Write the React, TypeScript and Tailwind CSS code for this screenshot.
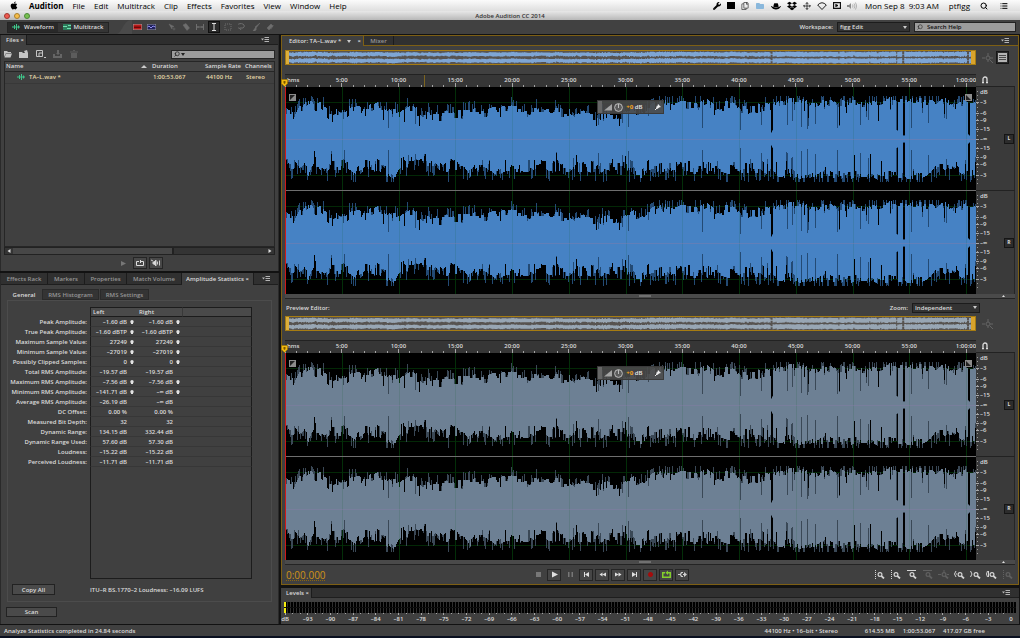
import React from 'react';
import { FaApple, FaDropbox, FaHatCowboy, FaFolder, FaWrench, FaVolumeDown, FaRegCopy } from 'react-icons/fa';
import { Search, List, Move } from 'lucide-react';

type Point = [number, number];

const COLS = 691;
const TOTAL_MIN = 60.88;

const TOP_ENVELOPE: Point[] = [
  [0, 31], [8, 27], [12, 34], [14, 38], [18, 37], [22, 42], [26, 41], [30, 36], [36, 37], [44, 28], [52, 31], [60, 29], [66, 36], [75, 33], [84, 35],
  [92, 37], [98, 38], [106, 29], [116, 33], [126, 36], [132, 33], [142, 28], [155, 27], [170, 29], [190, 31], [210, 32], [225, 34], [240, 31],
  [270, 31], [300, 29], [340, 28], [346, 34], [355, 30], [365, 35], [375, 40], [400, 38], [412, 39], [421, 42], [428, 37], [445, 38], [455, 33],
  [480, 36], [492, 38], [505, 41], [520, 40], [530, 36], [540, 41], [550, 38], [560, 41], [575, 39], [590, 38], [600, 42], [612, 42], [618, 40], [632, 42],
  [650, 38], [660, 42], [668, 36], [675, 39], [682, 40], [691, 38],
];
const BOTTOM_ENVELOPE: Point[] = [
  [0, 29], [8, 30], [14, 37], [18, 32], [24, 40], [30, 31], [40, 35], [48, 31], [56, 33], [62, 29], [70, 38], [78, 33], [86, 31], [98, 35], [108, 42],
  [114, 32], [124, 31], [135, 28], [150, 27], [158, 36], [165, 31], [180, 31], [186, 38], [194, 31], [200, 33], [210, 38], [222, 32], [235, 34],
  [250, 31], [280, 33], [310, 34], [340, 30], [352, 37], [356, 40], [362, 33], [380, 33], [400, 35], [425, 35], [450, 35], [475, 34], [490, 41],
  [505, 38], [520, 42], [540, 39], [560, 41], [580, 38], [600, 41], [615, 39], [632, 42], [645, 38], [652, 32], [668, 35], [682, 38], [691, 35],
];
const SLITS: Point[] = [
  [58, 20], [103, 11], [130, 15], [313, 14], [337, 16], [343, 12], [417, 11], [455, 9], [476, 14],
  [486, 6], [487, 8], [502, 14], [507, 18], [516, 12], [522, 10], [530, 15], [552, 11], [575, 14], [583, 19],
  [611, 9], [612, 8], [618, 3], [619, 3], [626, 11], [643, 16], [661, 20], [683, 4], [684, 3],
];

function envelope(points: Point[], x: number): number {
  for (let i = 1; i < points.length; i++) {
    if (x <= points[i][0]) {
      const [x0, y0] = points[i - 1];
      const [x1, y1] = points[i];
      return y0 + ((y1 - y0) * (x - x0)) / (x1 - x0);
    }
  }
  return points[points.length - 1][1];
}

function random(seed: number) {
  let s = seed;
  return () => {
    s = (s * 1664525 + 1013904223) % 4294967296;
    return s / 4294967296;
  };
}

function samples(points: Point[], seed: number, depth: number) {
  const rnd = random(seed);
  const solid: number[] = [];
  const peak: number[] = [];
  let held = 0;
  let left = 0;
  for (let x = 0; x < COLS; x++) {
    const base = envelope(points, x);
    const dense = x > 485;
    if (left <= 0) {
      held = Math.pow(rnd(), 1.6) * (dense ? depth * 0.7 : depth);
      left = 1 + Math.floor(rnd() * 3);
    }
    left--;
    const dip = rnd() < (dense ? 0.09 : 0.05) ? 4 + rnd() * (dense ? 18 : 8) : 0;
    const slit = SLITS.find((s) => s[0] === x);
    let value = base - held - dip;
    let top = Math.min(43, value + (rnd() < 0.5 ? rnd() * depth * 0.9 : 0));
    if (slit) {
      value = slit[1];
      top = slit[1] < 9 ? slit[1] + 1 : base * 0.9;
    }
    solid.push(Math.round(value));
    peak.push(Math.round(Math.max(top, value)));
  }
  return { solid, peak };
}

const upper = samples(TOP_ENVELOPE, 77, 10);
const lower = samples(BOTTOM_ENVELOPE, 4021, 13);

function outline(up: number[], down: number[]): string {
  let d = 'M0 ' + (52 - up[0]);
  for (let x = 0; x < COLS; x++) d += 'V' + (52 - up[x]) + 'H' + (x + 1);
  for (let x = COLS - 1; x >= 0; x--) d += 'V' + (52 + down[x]) + 'H' + x;
  return d + 'Z';
}

const SOLID_PATH = outline(upper.solid, lower.solid);
const PEAK_PATH = outline(upper.peak, lower.peak);

const minutes = Array.from({ length: 61 }, (_, i) => i);
const labels = minutes.filter((m) => m > 0 && m % 5 === 0);
const pct = (m: number) => (m / TOTAL_MIN) * 100 + '%';
const LEVELS = [-3, -6, -9, -15];
const level = (db: number) => 50 * Math.pow(10, db / 20);
const GRID_PATH = labels.map((m) => 'M' + (Math.round((m / TOTAL_MIN) * COLS) + 0.5) + ' 0V103').join('');

function Track({ color, peakColor }: { color: string; peakColor: string }) {
  return (
    <svg className="block min-h-24 w-full flex-1 bg-black" viewBox="0 0 691 103" preserveAspectRatio="none" shapeRendering="crispEdges">
      <path d={'M0 15.5H691M0 88.5H691' + GRID_PATH} stroke="#032806" />
      <path d={PEAK_PATH} fill={peakColor} />
      <path d={SOLID_PATH} fill={color} />
      <path d={GRID_PATH} stroke="#0a5a1a" strokeOpacity="0.12" />
      <path d="M0 52.5H691" stroke="#8a7aa8" strokeOpacity="0.4" />
    </svg>
  );
}

function ScaleColumn({ name }: { name: string }) {
  const rows = [
    { text: 'dB', top: 5 },
    ...LEVELS.map((db) => ({ text: String(db).replace('-', '–'), top: 50 - level(db) })),
    { text: '–∞', top: 50 },
    ...LEVELS.map((db) => ({ text: String(db).replace('-', '–'), top: 50 + level(db) })),
  ];
  return (
    <div className="relative flex-1 border-r border-[#262626]">
      <svg className="absolute inset-y-0 left-0 h-full w-[3px]" viewBox="0 0 3 103" preserveAspectRatio="none" shapeRendering="crispEdges">
        <path d="M1.5 4V100" stroke="#9a9a9a" strokeDasharray="1 3" />
        {rows.slice(1).map((r, i) => (
          <path key={i} d={'M0 ' + (r.top * 1.03).toFixed(0) + '.5h3'} stroke="#a8a8a8" />
        ))}
      </svg>
      {rows.map((r, i) => (
        <span key={i} className="absolute left-1 -translate-y-1/2 leading-none" style={{ top: r.top + '%' }}>
          {r.text}
        </span>
      ))}
      <button className="absolute top-1/2 right-0 h-2.5 w-2.5 -translate-y-1/2 border border-[#151515] bg-[#2c2c2c] text-center text-[5px] leading-none font-bold">
        {name}
      </button>
    </div>
  );
}

function Overview({ color, listButton }: { color: string; listButton?: boolean }) {
  return (
    <div className="flex h-[15px] items-center">
      <div className="relative h-full flex-1 border border-[#a67c12] bg-[#575350]">
        <svg className="block h-full w-full" viewBox="0 0 691 206" preserveAspectRatio="none">
          <path d={PEAK_PATH} fill={color} />
          <path d={PEAK_PATH} fill={color} transform="translate(0 102)" />
        </svg>
        <span className="absolute inset-y-0 left-0 w-[3px] bg-[#dcae3c]" />
        <span className="absolute inset-y-0 right-0 w-1 bg-[#d8a32c]" />
      </div>
      <div className="flex w-[39px] items-center justify-center gap-0.5">
        <svg className="h-3 w-3 text-[#646464]" viewBox="0 0 12 12" fill="none" stroke="currentColor">
          <path d="M0 6h3M6 1v3M8 6h3M6 8v2M8 8l3 3" />
          <circle cx="6" cy="6" r="2" />
        </svg>
        {listButton ? (
          <button aria-label="List view" className="flex h-[13px] w-[13px] items-center justify-center border border-[#161616] bg-[#2d2d2d]">
            <svg className="h-[9px] w-[9px]" viewBox="0 0 9 9" shapeRendering="crispEdges">
              <path d="M0 0h9v9H0z" fill="#b4b4b4" />
              <path d="M1 2.500h7M1 4.500h7M1 6.500h7" stroke="#4a4a4a" />
            </svg>
          </button>
        ) : (
          <span className="w-[13px]" />
        )}
      </div>
    </div>
  );
}

function Ruler({ marker }: { marker?: boolean }) {
  return (
    <div className="flex h-[13px]">
      <div className="relative flex-1">
        <div className="absolute inset-0 overflow-hidden border-t border-[#222] bg-[#363636]">
          <svg className="absolute inset-0 h-full w-full" shapeRendering="crispEdges">
            {minutes.map((m) => (
              <line key={m} x1={pct(m)} x2={pct(m)} y1={m % 5 === 0 ? 8 : 10} y2="13" stroke="#a5a5a5" />
            ))}
            {marker && <line x1="20.2%" x2="20.2%" y1="0" y2="13" stroke="#7c6420" />}
          </svg>
          <span className="absolute top-0.5 left-0.5 leading-none">hms</span>
          {labels.map((m) => (
            <span key={m} className="absolute top-0.5 -translate-x-1/2 leading-none" style={{ left: pct(m) }}>
              {m === 60 ? '1:00:00' : m + ':00'}
            </span>
          ))}
        </div>
        <svg className="absolute top-[5px] -left-1 z-10 h-2 w-[7px]" viewBox="0 0 7 8">
          <path d="M.5 .5h6v4l-3 3-3-3z" fill="#f0b810" stroke="#9c7200" strokeWidth=".6" />
          <path d="M2.500 2v2l1 1 1-1V2z" fill="#7a5800" />
        </svg>
      </div>
      <div className="flex w-[39px] items-center border-b border-[#222] pl-[5px]">
        <svg className="h-2 w-2" viewBox="0 0 8 8" fill="none" stroke="#dcdcdc" strokeWidth="1.3">
          <path d="M2 6.500V3a2 2 0 0 1 4 0v3.500M1 6.700h2M5 6.700h2" />
        </svg>
      </div>
    </div>
  );
}

function FadeHandle({ flip }: { flip?: boolean }) {
  return (
    <svg className="h-[7px] w-[7px]" viewBox="0 0 7 7">
      <path d="M0 0h7v7H0z" fill="#8c8c8c" />
      <path d="M1 1h5v5H1z" fill="#222" />
      <path d={flip ? 'M1 1l5 5V1z' : 'M1 6l5-5v5z'} fill="#8c8c8c" />
    </svg>
  );
}

function Waveforms({ color, peakColor }: { color: string; peakColor: string }) {
  return (
    <div className="flex flex-1">
      <div className="relative flex flex-1 flex-col gap-px bg-[#6e6e6e]">
        <Track color={color} peakColor={peakColor} />
        <Track color={color} peakColor={peakColor} />
        <span className="absolute inset-y-0 left-0 w-px bg-[#d01818]" />
        <div className="absolute inset-x-1 top-[7px] flex justify-between">
          <FadeHandle />
          <FadeHandle flip />
        </div>
        <div className="absolute top-[13px] left-[45.2%] flex h-[14px] w-[67px] items-center gap-0.5 border border-[#3a3a3a] bg-[#4a4a4a]/90 pr-0.5">
          <span className="h-full w-1 bg-[#666]" />
          <svg className="h-2 w-2" viewBox="0 0 8 8">
            <path d="M0 7.500L8 1v6.500z" fill="#a4a4a4" />
          </svg>
          <svg className="h-[9px] w-[9px]" viewBox="0 0 9 9" fill="none" stroke="#bcbcbc">
            <circle cx="4.500" cy="4.500" r="3.900" fill="#5c5c5c" />
            <path d="M4.500 1v4" />
          </svg>
          <span className="pl-px leading-none whitespace-nowrap text-[#e8e8e8]">
            <span className="font-bold text-[#f5a41c]">+0</span> dB
          </span>
          <svg className="ml-auto h-1.5 w-1.5" viewBox="0 0 6 6" stroke="#eee" fill="#eee">
            <path d="M0 6l2-2" />
            <path d="M3 0l3 3-2 .5L2.500 5 1 3l1.500-1z" stroke="none" />
          </svg>
        </div>
      </div>
      <div className="flex w-[39px] flex-col gap-px bg-[#222]">
        <div className="flex flex-1 bg-[#3a3a3a]">
          <ScaleColumn name="L" />
        </div>
        <div className="flex flex-1 bg-[#3a3a3a]">
          <ScaleColumn name="R" />
        </div>
      </div>
    </div>
  );
}

function TrackScroll() {
  return (
    <div className="flex h-[5px] items-center border-b border-[#242424] bg-[#4a4a4a]">
      <span className="flex-1" />
      <span className="h-0.5 w-3 bg-[#707070]" />
      <span className="flex flex-1 justify-end pr-2.5">
        <svg className="h-0.5 w-[3px]" viewBox="0 0 3 2">
          <path d="M0 2l1.500-2L3 2z" fill="#e0e0e0" />
        </svg>
      </span>
    </div>
  );
}

function PanelMenu() {
  return (
    <button aria-label="Panel menu" className="flex w-[17px] items-center">
      <svg className="h-[5px] w-2" viewBox="0 0 8 5">
        <path d="M0 1.500h3L1.500 3.500zM3.500 0H8v1H3.500zM3.500 2H8v1H3.500zM3.500 4H8v1H3.500z" fill="#b4b4b4" />
      </svg>
    </button>
  );
}

function Select({ id, value, className }: { id: string; value: string; className: string }) {
  return (
    <span className={'relative flex h-2.5 items-center border border-[#1c1c1c] bg-[#333] ' + className}>
      <select id={id} defaultValue={value} className="h-full w-full appearance-none bg-transparent pl-0.5 leading-none outline-none">
        <option>{value}</option>
      </select>
      <svg className="pointer-events-none absolute right-0.5 h-[3px] w-1" viewBox="0 0 4 3">
        <path d="M0 0h4L2 3z" fill="#ccc" />
      </svg>
    </span>
  );
}

function WaveIcon() {
  return (
    <svg className="h-1.5 w-2" viewBox="0 0 8 6" stroke="#3fc58a" fill="none">
      <path d="M0 3h8M2.500 1v4M4.500 0v6M6.500 1.500v3" />
    </svg>
  );
}

type Stat = [string, string, string, boolean];
const STATS: Stat[] = [
  ['Peak Amplitude:', '–1.60 dB', '–1.60 dB', true],
  ['True Peak Amplitude:', '–1.60 dBTP', '–1.60 dBTP', true],
  ['Maximum Sample Value:', '27249', '27249', true],
  ['Minimum Sample Value:', '–27019', '–27019', true],
  ['Possibly Clipped Samples:', '0', '0', true],
  ['Total RMS Amplitude:', '–19.57 dB', '–19.57 dB', false],
  ['Maximum RMS Amplitude:', '–7.56 dB', '–7.56 dB', true],
  ['Minimum RMS Amplitude:', '–141.71 dB', '–∞ dB', true],
  ['Average RMS Amplitude:', '–26.19 dB', '–∞ dB', false],
  ['DC Offset:', '0.00 %', '0.00 %', false],
  ['Measured Bit Depth:', '32', '32', false],
  ['Dynamic Range:', '134.15 dB', '332.44 dB', false],
  ['Dynamic Range Used:', '57.60 dB', '57.30 dB', false],
  ['Loudness:', '–15.22 dB', '–15.22 dB', false],
  ['Perceived Loudness:', '–11.71 dB', '–11.71 dB', false],
];

function StatCell({ text, mark }: { text: string; mark: boolean }) {
  return (
    <div className="flex items-center justify-end gap-[3px] pr-[3px] whitespace-nowrap">
      {text}
      <span className="flex w-1 justify-center">
        {mark && (
          <svg className="h-1 w-1" viewBox="0 0 4 4">
            <circle cx="2" cy="1.700" r="1.700" fill="#e2e2e2" />
            <path d="M1 2h2v2H1z" fill="#e2e2e2" />
          </svg>
        )}
      </span>
    </div>
  );
}

function MenuBar() {
  const menus = ['File', 'Edit', 'Multitrack', 'Clip', 'Effects', 'Favorites', 'View', 'Window', 'Help'];
  return (
    <header className="flex h-[11px] items-center justify-between bg-linear-to-b from-[#fbfbfb] to-[#dedede] pr-2.5 pl-2.5 text-[8px] leading-none font-medium text-black">
      <nav className="flex items-center gap-[9px]">
        <FaApple className="mr-0.5 h-[9px] w-2" />
        <button className="font-bold">Audition</button>
        {menus.map((m) => (
          <button key={m}>{m}</button>
        ))}
      </nav>
      <div className="flex items-center gap-1.5">
        <FaWrench className="h-2 w-2" />
        <span className="h-[7px] w-2 bg-black" />
        <FaRegCopy className="h-2 w-2 text-[#444]" />
        <FaFolder className="h-2 w-2.5 text-[#8ab8dc]" />
        <FaHatCowboy className="h-2 w-2.5" />
        <FaDropbox className="h-2.5 w-2.5" />
        <Move className="h-2 w-2" />
        <svg className="h-2 w-2.5" viewBox="0 0 10 8" fill="none" stroke="#222">
          <path d="M.7 3Q5-1.500 9.300 3L5 7.500z" />
        </svg>
        <svg className="h-[7px] w-2" viewBox="0 0 8 7" fill="none" stroke="#111">
          <path d="M.5 .5h7v6h-7zM3 2v3M5 3.500H3" strokeWidth="1.300" />
        </svg>
        <svg className="h-2 w-2.5" viewBox="0 0 10 8" fill="none" stroke="#999">
          <path d="M0 3h2l2-2v6L2 5H0z" fill="#888" stroke="none" />
          <path d="M5.500 2.500q1 1.500 0 3M7 1.500q2 2.500 0 5M8.500 .5q2.500 3.500 0 7" strokeWidth=".7" />
        </svg>
        <span className="pl-0.5 whitespace-pre">Mon Sep 8  9:03 AM</span>
        <span className="pl-1">ptfigg</span>
        <Search className="mx-1 h-2 w-2" strokeWidth={3} />
        <List className="h-2 w-3" strokeWidth={3} />
      </div>
    </header>
  );
}

const TOOLS = [
  'M1 1l3 5V4l2-.5zM6 4.500v3M4.500 6h3',
  'M1 2l3-1.500L7.500 5 5 7.500z',
  'M.5 1v6M7.500 1v6M1 4h6M2 3v2M6 3v2',
  'M2 .5h4M4 .5v7M2 7.500h4',
  'M1 1h6v6H1z',
  'M3 7L2 5.500a3.500 2.500 0 1 1 3-.5H2',
  'M8 0L4 5 3 4zM3.500 4.500L1 8h2l1.500-2z',
  'M1 5l4-4 2 2-4 4zM5 6.500L7.500 2',
];

function Toolbar() {
  return (
    <div className="flex h-[14px] items-center bg-[#414141] pr-1 pl-[7px]">
      <div className="flex h-[11px] border border-[#242424]">
        <button className="flex w-[50px] items-center justify-center gap-1 bg-[#292929]">
          <WaveIcon /> Waveform
        </button>
        <button className="flex w-[50px] items-center justify-center gap-[3px] bg-[#353535]">
          <svg className="h-1.5 w-2" viewBox="0 0 8 6">
            <path d="M0 0h8v6H0z" fill="#2d7d5c" />
            <path d="M0 2h4v1H0zM4 4h4v1H4zM5 1h3v1H5z" fill="#6fe0b0" />
          </svg>
          Multitrack
        </button>
      </div>
      <svg className="ml-2 h-3.5 w-[15px]" viewBox="0 0 15 14">
        <path d="M0 14C6 12 6 0 15 0v14z" fill="#4a4a4a" />
      </svg>
      <div className="flex items-center gap-[5px] pl-px">
        <svg className="h-1.5 w-[9px]" viewBox="0 0 9 6">
          <path d="M0 0h9v6H0z" fill="#999" />
          <path d="M.5 .5h8v5h-8z" fill="#c01818" />
          <path d="M1 2.500h7v1.500H1z" fill="#6c0808" />
        </svg>
        <svg className="h-1.5 w-[9px]" viewBox="0 0 9 6">
          <path d="M0 0h9v6H0z" fill="#999" />
          <path d="M.5 .5h8v5h-8z" fill="#20205c" />
          <path d="M.5 3l1.500-1 2 2 2-2 2.500 1" stroke="#9090f0" fill="none" />
        </svg>
      </div>
      <div className="flex items-center gap-0.5 pl-2.5">
        {TOOLS.map((d, i) => (
          <button
            key={i}
            aria-label={'Tool ' + (i + 1)}
            className={i === 3 ? 'flex h-3 w-3 items-center justify-center border border-[#111] bg-[#2a2a2a] text-[#ddd]' : 'flex h-3 w-3 items-center justify-center text-[#6e6e6e]'}
          >
            <svg className="h-2 w-2 shrink-0" viewBox="0 0 8 8" fill={i < 2 || i > 5 ? 'currentColor' : 'none'} stroke="currentColor" strokeWidth={i < 2 || i > 5 ? 0.5 : 1} strokeDasharray={i === 4 ? '1 1' : undefined}>
              <path d={d} />
            </svg>
          </button>
        ))}
      </div>
      <div className="ml-auto flex items-center">
        <label htmlFor="workspace" className="pr-1">Workspace:</label>
        <Select id="workspace" value="figg Edit" className="w-[73px]" />
        <label className="ml-1 flex h-2.5 w-[102px] items-center gap-1 border border-[#222] bg-[#9c9c9c] pl-0.5 text-[#111]">
          <Search className="h-1.5 w-1.5 -scale-x-100" />
          <input aria-label="Search help" defaultValue="Search Help" className="w-20 bg-transparent leading-none outline-none" />
        </label>
      </div>
    </div>
  );
}

function FilesPanel() {
  return (
    <section className="flex flex-1 flex-col border-x border-[#2a2a2a] bg-[#404040]">
      <div className="flex h-2.5 items-stretch border-b border-[#1e1e1e] bg-[#2e2e2e]">
        <button className="-mb-px w-[26px] border-r border-[#1c1c1c] bg-[#404040] pl-[5px] text-left whitespace-nowrap">Files ×</button>
        <span className="flex-1" />
        <PanelMenu />
      </div>
      <div className="flex h-4 items-center gap-[7px] px-[3px] pt-0.5">
        <svg className="h-2 w-2" viewBox="0 0 8 8"><path d="M0 1h3l1 1h3v1H2L0 7zM2 3.500h6L6.500 7.500H.5z" fill="#c4c4c4" /></svg>
        <svg className="h-2 w-2.5" viewBox="0 0 10 8"><path d="M0 2h3l1 1h2l-1-2 3-1 1 3v5H0z" fill="#c4c4c4" /></svg>
        <svg className="h-2 w-2.5" viewBox="0 0 10 8" fill="none" stroke="#c4c4c4"><path d="M.5 .5h6v6h-6zM3 3v3M3 3h3M8 7.500h2" /></svg>
        <svg className="h-2 w-2.5" viewBox="0 0 10 8" fill="#666"><path d="M0 4h2v2h5V4h2v4H0zM3 3h1V0h2v3h1L5 5z" /></svg>
        <svg className="h-2 w-2" viewBox="0 0 8 8" fill="#5c5c5c"><path d="M1 3h6v5H1zM0 1.500h8v1H0zM3 0h2v1H3z" /></svg>
        <label className="ml-auto flex h-[9px] w-[104px] items-center gap-px border border-[#252525] bg-[#9c9c9c] pl-0.5 text-[#222]">
          <Search className="h-1.5 w-1.5 -scale-x-100" strokeWidth={3} />
          <svg className="h-[3px] w-1" viewBox="0 0 4 3"><path d="M0 0h4L2 3z" fill="#222" /></svg>
          <input aria-label="Search files" className="w-20 bg-transparent leading-none outline-none" />
        </label>
      </div>
      <div className="mx-[3px] flex flex-1 flex-col border border-[#262626]">
        <table className="w-full table-fixed text-left leading-none">
          <thead>
            <tr className="h-[9px] border-b border-[#262626] bg-[#464646]">
              <th className="pl-px font-semibold">
                <span className="flex items-center justify-between pr-1">
                  Name
                  <svg className="h-[3px] w-1.5" viewBox="0 0 6 3"><path d="M0 3l3-3 3 3z" fill="#ccc" /></svg>
                </span>
              </th>
              <th className="w-[53px] pl-px font-semibold">Duration</th>
              <th className="w-[41px] pl-px font-semibold whitespace-nowrap">Sample Rate</th>
              <th className="w-[29px] font-semibold">Channels</th>
            </tr>
          </thead>
          <tbody className="text-[#e4d8a8]">
            <tr className="h-3 border-b border-[#383838]">
              <td className="pl-3">
                <span className="flex items-center gap-1">
                  <WaveIcon /> TA–L.wav *
                </span>
              </td>
              <td className="pl-0.5">1:00:53.067</td>
              <td className="pl-0.5">44100 Hz</td>
              <td className="pl-px">Stereo</td>
            </tr>
          </tbody>
        </table>
      </div>
      <div className="mx-[3px] flex h-2 items-center border border-[#222] bg-[#343434]">
        <span className="flex w-2 justify-center"><svg className="h-1 w-1" viewBox="0 0 4 4"><path d="M3.500 0v4L.5 2z" fill="#ddd" /></svg></span>
        <span className="h-full w-3/5 border-r-2 border-[#222] bg-[#474747]" />
        <span className="ml-auto flex w-2 justify-center"><svg className="h-1 w-1" viewBox="0 0 4 4"><path d="M.5 0v4l3-2z" fill="#ddd" /></svg></span>
      </div>
      <div className="flex h-4 items-center justify-center gap-0.5">
        <button aria-label="Play" className="flex h-3 w-3.5 items-center justify-center"><svg className="h-[5px] w-[5px]" viewBox="0 0 5 5"><path d="M0 0l5 2.500L0 5z" fill="#777" /></svg></button>
        <button aria-label="Loop" className="flex h-3 w-3.5 items-center justify-center border border-[#252525] bg-[#484848]">
          <svg className="h-1.5 w-2" viewBox="0 0 8 6" fill="none" stroke="#ddd"><path d="M3 1.500H.5v4h7v-4H5M4.500 0v3" /></svg>
        </button>
        <button aria-label="Auto-play" className="flex h-3 w-3.5 items-center justify-center border border-[#252525] bg-[#484848]">
          <svg className="h-2 w-2.5" viewBox="0 0 10 8" fill="none" stroke="#ccc">
            <path d="M0 1l2 1M2 3h1l2-2v6L3 5H2z" fill="#ddd" />
            <path d="M6.500 2.500v3M8.500 1.500v5" />
          </svg>
        </button>
      </div>
    </section>
  );
}

function StatsPanel() {
  const button = 'border border-[#222] bg-[#4a4a4a] leading-none';
  return (
    <section className="flex flex-col border-x border-[#2a2a2a] bg-[#404040] pb-[7px]">
      <div className="flex h-3 items-stretch border-b border-[#1e1e1e] bg-[#303030] whitespace-nowrap text-[#969696]">
        <button className="w-[47px] border-r border-[#1c1c1c]">Effects Rack</button>
        <button className="w-[37px] border-r border-[#1c1c1c]">Markers</button>
        <button className="w-[42px] border-r border-[#1c1c1c]">Properties</button>
        <button className="w-[55px] border-r border-[#1c1c1c]">Match Volume</button>
        <button className="-mb-px flex-1 border-r border-[#1c1c1c] bg-[#404040] text-[#dedede]">Amplitude Statistics ×</button>
        <span className="flex w-6 items-center pl-2">
          <PanelMenu />
        </span>
      </div>
      <div className="mx-1.5 mt-1 flex h-[11px] items-stretch gap-px text-[#969696]">
        <button className="w-[34px] text-[#dedede]">General</button>
        <button className="w-[57px] border border-[#2a2a2a] bg-[#343434]">RMS Histogram</button>
        <button className="w-[49px] border border-[#2a2a2a] bg-[#343434]">RMS Settings</button>
      </div>
      <div className="mx-1.5 flex flex-col border border-[#4c4c4c] pt-1.5 pb-1.5">
        <table className="w-[244px] table-fixed border-separate border-spacing-0 text-right leading-none">
          <thead>
            <tr className="h-2.5 text-left">
              <td className="w-[82px]" />
              <th className="w-[47px] border border-r-0 border-[#1c1c1c] bg-[#4a4a4a] pl-0.5 font-semibold">Left</th>
              <th className="w-[46px] border-y border-r border-y-[#1c1c1c] border-r-[#393939] bg-[#4a4a4a] pl-0.5 font-semibold">Right</th>
              <th aria-label="Other" className="border border-l-0 border-[#1c1c1c] bg-[#4a4a4a]" />
            </tr>
          </thead>
          <tbody>
            {STATS.map(([name, left, right, mark]) => (
              <tr key={name} className="h-2.5">
                <th scope="row" className="pr-[3px] text-right font-semibold whitespace-nowrap">{name}</th>
                <td className="border-b border-l border-b-[#373737] border-l-[#1c1c1c]"><StatCell text={left} mark={mark} /></td>
                <td className="border-b border-[#373737]"><StatCell text={right} mark={mark} /></td>
                <td className="border-r border-b border-r-[#1c1c1c] border-b-[#373737]" />
              </tr>
            ))}
            <tr className="h-28">
              <td />
              <td colSpan={3} className="border border-t-0 border-[#1c1c1c]" />
            </tr>
          </tbody>
        </table>
        <div className="mt-[5px] flex items-center pl-1">
          <button className={button + ' h-[11px] w-[43px]'}>Copy All</button>
          <span className="pl-[35px] whitespace-nowrap">ITU–R BS.1770–2 Loudness: –16.09 LUFS</span>
        </div>
      </div>
      <button className={button + ' mt-[5px] ml-[5px] h-2.5 w-[51px]'}>Scan</button>
    </section>
  );
}

const TRANSPORT: { name: string; d: string; color: string; flat?: boolean }[] = [
  { name: 'Stop', d: 'M2 2h5v5H2z', color: '#777', flat: true },
  { name: 'Play', d: 'M2 1.500l6 3-6 3z', color: '#e0e0e0' },
  { name: 'Pause', d: 'M2 2h1.500v5H2zM5.500 2H7v5H5.500z', color: '#777', flat: true },
  { name: 'Previous', d: 'M2 2h1v5H2zM7 2v5L3 4.500z', color: '#e0e0e0' },
  { name: 'Rewind', d: 'M4.500 2.500v4L1.500 4.500zM8 2.500v4L4.500 4.500z', color: '#e0e0e0' },
  { name: 'Forward', d: 'M1 2.500v4L4.500 4.500zM4.500 2.500v4L7.500 4.500z', color: '#e0e0e0' },
  { name: 'Next', d: 'M6 2h1v5H6zM2 2v5L6 4.500z', color: '#e0e0e0' },
  { name: 'Record', d: 'M4.500 2a2.500 2.500 0 1 0 .01 0z', color: '#a40c0c' },
  { name: 'Loop', d: 'M0 2h3v1.500H1.500v3h6v-3H6V5L3.500 2.700 6 .5V2h3v6H0z', color: '#84d02c' },
  { name: 'Skip', d: 'M0 4h2l1-2h2v1H4L3 4.500 4 6h1v1H3L2 5H0zM6 2l3 2.500L6 7V5H5V4h1z', color: '#d0d0d0' },
];

const ZOOMS = [
  { d: 'M1.500 0v9', dim: false },
  { d: 'M1.500 0v9', dim: false },
  { d: 'M1 .5h9', dim: false },
  { d: 'M1 .5h9', dim: true },
  { d: 'M0 4.500h3M6 0v2M9 4.500h2', dim: true },
  { d: 'M2 1L.5 4 2 7M2 4h1', dim: false },
  { d: 'M.5 1L2 4 .5 7', dim: false },
  { d: 'M1.500 1L.5 4l1 3M2.500 1v6', dim: false },
  { d: 'M1.500 0v9', dim: true },
];

function EditorPanel() {
  return (
    <section className="flex flex-1 flex-col border border-[#7d5f14] bg-[#404040]">
      <div className="flex h-2.5 items-stretch border-b border-[#7d5f14] bg-[#303030]">
        <button className="-mb-px flex w-[82px] items-center justify-between border-r border-[#7d5f14] bg-[#404040] pr-0.5 pl-[7px] whitespace-nowrap">
          Editor: TA–L.wav *
          <svg className="h-[3px] w-1" viewBox="0 0 4 3"><path d="M0 0h4L2 3z" fill="#ccc" /></svg>
          <span>×</span>
        </button>
        <button className="w-[30px] border-r border-[#1c1c1c] text-[#969696]">Mixer</button>
        <span className="flex-1" />
        <PanelMenu />
      </div>
      <div className="flex flex-1 flex-col pr-[3px] pl-[3px]">
        <div className="pt-1 pb-[9px]"><Overview color="#7fa6d4" listButton /></div>
        <Ruler marker />
        <Waveforms color="#4682c4" peakColor="#234a74" />
        <TrackScroll />
        <div className="flex h-[17px] items-center">
          <span className="flex-1 pl-px">Preview Editor:</span>
          <label htmlFor="zoom" className="pr-1">Zoom:</label>
          <Select id="zoom" value="Independent" className="mr-[35px] w-[68px]" />
        </div>
        <div className="pb-[9px]"><Overview color="#98a6b4" /></div>
        <Ruler />
        <Waveforms color="#6d8094" peakColor="#3a4856" />
        <TrackScroll />
        <div className="flex h-[19px] items-center">
          <span className="w-1/3 pl-px text-[10px] leading-none font-medium text-[#d09418] underline decoration-[#8a6410] decoration-dotted">0:00.000</span>
          <div className="flex items-center justify-center gap-0.5 pl-[3px]">
            {TRANSPORT.map((t) => (
              <button
                key={t.name}
                aria-label={t.name}
                className={t.flat ? 'flex h-3 w-3.5 items-center justify-center' : 'flex h-3 w-3.5 items-center justify-center border border-[#252525] bg-[#464646]'}
              >
                <svg className="h-[9px] w-[9px]" viewBox="0 0 9 9"><path d={t.d} fill={t.color} /></svg>
              </button>
            ))}
          </div>
          <div className="ml-auto flex items-center justify-end gap-[5px] pr-0.5">
            {ZOOMS.map((z, i) => (
              <button key={i} aria-label={'Zoom ' + (i + 1)} className={z.dim ? 'text-[#606060]' : 'text-[#d4d4d4]'}>
                <svg className="block h-[9px] w-[11px]" viewBox="0 0 11 9" fill="none" stroke="currentColor">
                  <path d={z.d} strokeDasharray={z.d === 'M1.500 0v9' ? '1 1' : undefined} />
                  <circle cx="6" cy="4.500" r="1.900" strokeWidth="1.200" />
                  <path d="M7.300 5.800L10 8.500" strokeWidth="1.800" />
                </svg>
              </button>
            ))}
          </div>
        </div>
      </div>
    </section>
  );
}

function LevelsPanel() {
  const marks = Array.from({ length: 33 }, (_, i) => i);
  const at = (n: number) => (n / 96) * 100 + '%';
  return (
    <section className="flex h-9 flex-col bg-[#404040]">
      <div className="flex h-2.5 items-stretch border-b border-[#1e1e1e] bg-[#303030]">
        <button className="-mb-px w-[31px] border-r border-[#1c1c1c] bg-[#404040] pl-[5px] text-left whitespace-nowrap">Levels ×</button>
        <span className="flex-1" />
        <PanelMenu />
      </div>
      <div className="mx-[3px] mt-1 flex h-[11px] bg-black">
        <svg className="block h-full w-full" shapeRendering="crispEdges">
          <defs>
            <pattern id="bars" width="3" height="11" patternUnits="userSpaceOnUse">
              <path d="M.5 0v11" stroke="#2e2e2e" />
            </pattern>
          </defs>
          <rect width="100%" height="11" fill="url(#bars)" />
          <path d="M0 5.500h2000" stroke="#0c0c0c" />
          <path d="M0 0h2v5H0zM0 6h2v5H0z" fill="#f4ec10" />
        </svg>
      </div>
      <div className="relative mr-2 ml-1 flex-1">
        <svg className="absolute inset-0 h-full w-full" shapeRendering="crispEdges">
          {Array.from({ length: 97 }, (_, n) => (
            <line key={n} x1={at(n)} x2={at(n)} y1="0" y2={n % 3 === 0 ? 2 : 1} stroke="#a8a8a8" />
          ))}
        </svg>
        {marks.map((i) => (
          <span key={i} className="absolute top-[3px] -translate-x-1/2 leading-none" style={{ left: at(i * 3) }}>
            {i === 0 ? 'dB' : i === 32 ? '0' : '–' + (96 - i * 3)}
          </span>
        ))}
      </div>
    </section>
  );
}

export default function App() {
  return (
    <div className="flex min-h-screen flex-col bg-[#121212] font-['Open_Sans',sans-serif] text-[6px] leading-none font-semibold text-[#dcdcdc]">
      <MenuBar />
      <div className="flex h-[9px] items-center bg-linear-to-b from-[#e8e8e8] to-[#b8b8b8] px-1 text-[#333]">
        <span className="flex flex-1 gap-1">
          <button aria-label="Close" className="h-1.5 w-1.5 rounded-full border border-[#a03830] bg-[#ee5a50]" />
          <button aria-label="Minimize" className="h-1.5 w-1.5 rounded-full border border-[#a88030] bg-[#f5bd4a]" />
          <button aria-label="Maximize" className="h-1.5 w-1.5 rounded-full border border-[#4c8838] bg-[#78c050]" />
        </span>
        <h1>Adobe Audition CC 2014</h1>
        <span className="flex-1" />
      </div>
      <Toolbar />
      <main className="flex flex-1 gap-0.5 pt-px">
        <div className="flex w-[279px] flex-col gap-0.5">
          <FilesPanel />
          <StatsPanel />
        </div>
        <div className="flex flex-1 flex-col gap-[3px] pr-px">
          <EditorPanel />
          <LevelsPanel />
        </div>
      </main>
      <footer className="mt-px flex h-[13px] items-center border-b-2 border-[#0a1020] bg-[#404040] pr-[35px] pl-1">
        <span className="flex-1">Analyze Statistics completed in 24.84 seconds</span>
        <span className="pr-[27px]">44100 Hz • 16–bit • Stereo</span>
        <span className="pr-2">614.55 MB</span>
        <span className="pr-2">1:00:53.067</span>
        <span>417.07 GB free</span>
      </footer>
    </div>
  );
}
